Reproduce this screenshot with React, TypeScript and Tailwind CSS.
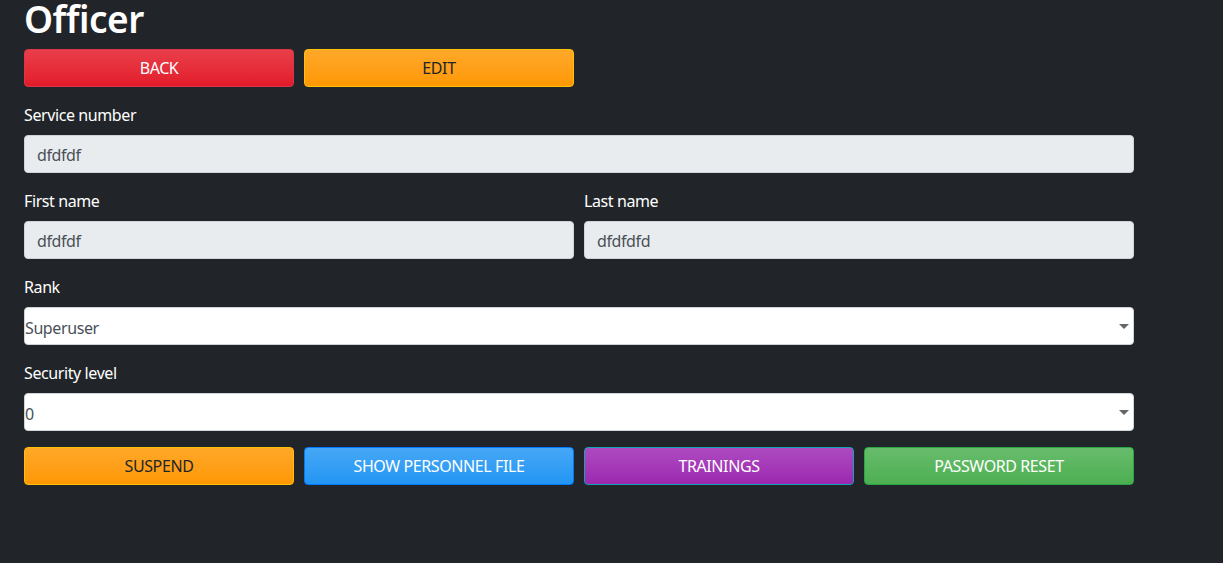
import { ReactNode } from 'react';

const font = { fontFamily: '"Noto Sans", "Open Sans", sans-serif' };

function Label({ children }: { children: ReactNode }) {
  return <label className="block text-[16px] leading-6 text-white mb-2">{children}</label>;
}

function ReadOnlyInput({ value }: { value: string }) {
  return (
    <div className="h-[38px] w-full rounded border border-[#ced4da] bg-[#e9ecef] px-3 pt-[2px] flex items-center text-[16px] text-[#495057]">
      {value}
    </div>
  );
}

function SelectBox({ value }: { value: string }) {
  return (
    <div className="relative h-[38px] w-full rounded border border-[#ced4da] bg-white pt-[3px] flex items-center text-[16px] text-[#495057]">
      {value}
      <svg className="absolute right-[4px] top-[16px]" width="10" height="5" viewBox="0 0 10 5">
        <path d="M0 0 L10 0 L5 5 Z" fill="#666" />
      </svg>
    </div>
  );
}

const btn = 'h-[38px] w-[270px] rounded border text-[16px] flex items-center justify-center';

export default function App() {
  return (
    <div className="h-[563px] overflow-hidden bg-[#212529] px-6 tracking-[-0.4px]" style={font}>
      <div className="w-[1110px]">
        <h1 className="text-[37px] font-semibold leading-[48px] text-white -mt-[5px] mb-[6px] tracking-[-0.5px]">Officer</h1>
        <div className="flex gap-[10px] mb-4">
          <button className={`${btn} border-[#dc3545] bg-gradient-to-b from-[#e83e4a] to-[#e3192a] text-white`}>BACK</button>
          <button className={`${btn} border-[#ffc107] bg-gradient-to-b from-[#ffa828] to-[#ff9800] text-[#212529]`}>EDIT</button>
        </div>

        <div className="mb-4">
          <Label>Service number</Label>
          <ReadOnlyInput value="dfdfdf" />
        </div>

        <div className="grid grid-cols-2 gap-[10px] mb-4">
          <div>
            <Label>First name</Label>
            <ReadOnlyInput value="dfdfdf" />
          </div>
          <div>
            <Label>Last name</Label>
            <ReadOnlyInput value="dfdfdfd" />
          </div>
        </div>

        <div className="mb-4">
          <Label>Rank</Label>
          <SelectBox value="Superuser" />
        </div>

        <div className="mb-4">
          <Label>Security level</Label>
          <SelectBox value="0" />
        </div>

        <div className="flex gap-[10px]">
          <button className={`${btn} border-[#ffc107] bg-gradient-to-b from-[#ffa828] to-[#ff9800] text-[#212529]`}>SUSPEND</button>
          <button className={`${btn} border-[#007bff] bg-gradient-to-b from-[#45a7f6] to-[#2196f3] text-white`}>SHOW PERSONNEL FILE</button>
          <button className={`${btn} border-[#17a2b8] bg-gradient-to-b from-[#ad4ac0] to-[#9c27b0] text-white`}>TRAININGS</button>
          <button className={`${btn} border-[#28a745] bg-gradient-to-b from-[#68bc6c] to-[#4caf50] text-white`}>PASSWORD RESET</button>
        </div>
      </div>
    </div>
  );
}
